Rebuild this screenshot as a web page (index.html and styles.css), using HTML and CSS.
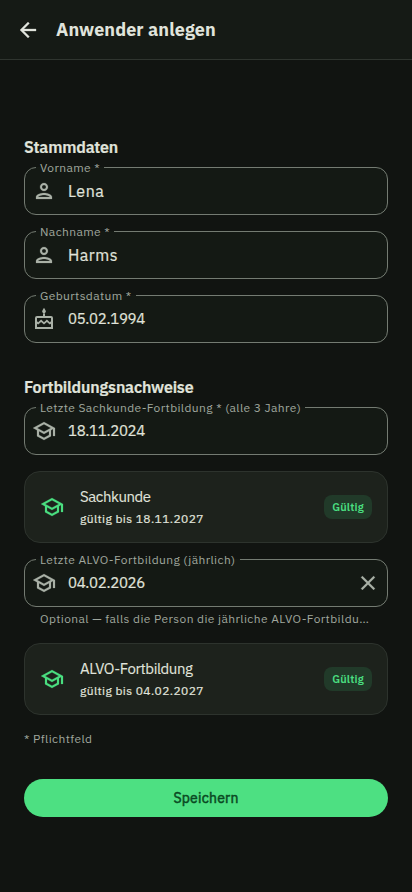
FILE: index.html
```html
<!DOCTYPE html>
<html lang="de">
<head>
<meta charset="utf-8">
<meta name="viewport" content="width=device-width, initial-scale=1">
<title>Anwender anlegen</title>
<link rel="stylesheet" href="styles.css">
</head>
<body>
<svg class="sprite" aria-hidden="true">
  <symbol id="back" viewBox="0 0 24 24"><path d="M20 11H7.830l5.590-5.590L12 4l-8 8 8 8 1.410-1.410L7.830 13H20v-2z" stroke="currentColor" stroke-width=".3"/></symbol>
  <symbol id="person" viewBox="0 0 24 24"><path d="M12 6c1.100 0 2 .9 2 2s-.9 2-2 2-2-.9-2-2 .9-2 2-2m0 10c2.700 0 5.800 1.290 6 2H6c.23-.72 3.310-2 6-2m0-12C9.790 4 8 5.790 8 8s1.790 4 4 4 4-1.790 4-4-1.790-4-4-4zm0 10c-2.670 0-8 1.340-8 4v2h16v-2c0-2.660-5.330-4-8-4z" stroke="currentColor" stroke-width=".2"/></symbol>
  <symbol id="cake" viewBox="0 0 24 24"><path d="M12 0.800l-1.600 2.700a1.850 1.850 0 1 0 3.200 0zM11 6.500h2V9h6a2 2 0 0 1 2 2v11H3V11a2 2 0 0 1 2-2h6zM5 11v3.200l1.200 1.100 2.900-2.700 2.900 2.700 2.900-2.700 2.900 2.700 1.200-1.100V11zm0 5.700V20h14v-3.300l-1.200.9-2.900-2.600-2.900 2.600L9.100 15l-2.900 2.600z" fill-rule="evenodd"/></symbol>
  <symbol id="school" viewBox="0 0 24 24"><path d="M12 3L1 9l4 2.180v6L12 21l7-3.820v-6l2-1.090V17h2V9L12 3zm6.820 6L12 12.720 5.180 9 12 5.280 18.820 9zM17 15.990l-5 2.730-5-2.730v-3.720L12 15l5-2.730v3.720z" stroke="currentColor" stroke-width=".2"/></symbol>
  <symbol id="close" viewBox="0 0 24 24"><path d="M19 6.410L17.590 5 12 10.590 6.410 5 5 6.410 10.590 12 5 17.590 6.410 19 12 13.410 17.590 19 19 17.590 13.410 12z" stroke="currentColor" stroke-width=".2"/></symbol>
</svg>
<header class="bar">
  <svg class="icon"><use href="#back"/></svg>
  <h1 class="title">Anwender anlegen</h1>
</header>
<main class="form">
  <h2 class="section">Stammdaten</h2>
  <fieldset class="field"><legend class="label">Vorname *</legend><div class="control"><svg class="icon"><use href="#person"/></svg><span class="value">Lena</span></div></fieldset>
  <fieldset class="field"><legend class="label">Nachname *</legend><div class="control"><svg class="icon"><use href="#person"/></svg><span class="value">Harms</span></div></fieldset>
  <fieldset class="field"><legend class="label">Geburtsdatum *</legend><div class="control"><svg class="icon"><use href="#cake"/></svg><span class="value date">05.02.1994</span></div></fieldset>
  <h2 class="section training">Fortbildungsnachweise</h2>
  <fieldset class="field"><legend class="label">Letzte Sachkunde-Fortbildung * (alle 3 Jahre)</legend><div class="control"><svg class="icon"><use href="#school"/></svg><span class="value date">18.11.2024</span></div></fieldset>
  <section class="card">
    <svg class="icon"><use href="#school"/></svg>
    <div class="info"><div class="name">Sachkunde</div><div class="until">gültig bis 18.11.2027</div></div>
    <span class="badge">Gültig</span>
  </section>
  <fieldset class="field"><legend class="label">Letzte ALVO-Fortbildung (jährlich)</legend><div class="control"><svg class="icon"><use href="#school"/></svg><span class="value date">04.02.2026</span><svg class="icon clear"><use href="#close"/></svg></div></fieldset>
  <p class="helper">Optional — falls die Person die jährliche ALVO-Fortbildu…</p>
  <section class="card">
    <svg class="icon"><use href="#school"/></svg>
    <div class="info"><div class="name">ALVO-Fortbildung</div><div class="until">gültig bis 04.02.2027</div></div>
    <span class="badge">Gültig</span>
  </section>
  <p class="required">* Pflichtfeld</p>
  <button class="save" type="button">Speichern</button>
</main>
</body>
</html>
```
FILE: styles.css
```css
* { box-sizing: border-box; }
html { background: #111411; }
body {
  margin: 0;
  min-height: 892px;
  background: #111411;
  color: #e0e4dc;
  font-family: "IBM Plex Sans", "Noto Sans", sans-serif;
}
h1, h2, p { margin: 0; }
.sprite { display: none; }
.icon { width: 24px; height: 24px; flex: none; fill: currentColor; }
.bar {
  display: flex;
  align-items: center;
  gap: 16px;
  height: 60px;
  padding: 1px 16px 0;
  background: #151a15;
  border-bottom: 1px solid #2f352f;
}
.title { font-size: 18px; line-height: 24px; font-weight: 700; letter-spacing: 0.08px; }
.form { display: flex; flex-direction: column; padding: 75px 24px 0; }
.section { height: 24px; margin-bottom: 8px; font-size: 16px; line-height: 24px; font-weight: 600; letter-spacing: -0.17px; -webkit-text-stroke: 0.2px currentColor; }
.section.training { margin-top: 16px; }
.field {
  min-width: 0;
  height: 56px;
  margin: -8px 0 16px;
  padding: 0 7px;
  background: #141914;
  border: 1px solid #747b72;
  border-radius: 12px;
}
.label { height: 16px; margin-left: 4px; padding: 1px 4px 0; font-size: 12px; line-height: 16px; letter-spacing: 0.38px; color: #a0a79e; white-space: nowrap; }
.control { display: flex; align-items: center; height: 32px; color: #aab1a7; }
.value { margin-left: 12px; font-size: 16px; line-height: 24px; letter-spacing: 0.5px; color: #e0e4dc; -webkit-text-stroke: 0.2px currentColor; }
.value.date { font-size: 15px; letter-spacing: -0.32px; }
.clear { margin-left: auto; }
.card {
  display: flex;
  align-items: center;
  height: 72px;
  margin-bottom: 16px;
  padding: 0 15px;
  background: #1d221c;
  border: 1px solid #2d332d;
  border-radius: 16px;
  color: #4ade80;
}
.info { flex: 1; margin-left: 16px; color: #e0e4dc; }
.name { font-size: 15px; line-height: 24px; letter-spacing: -0.43px; -webkit-text-stroke: 0.1px currentColor; }
.until { font-size: 12px; line-height: 20px; font-weight: 400; letter-spacing: 0.4px; -webkit-text-stroke: 0.2px currentColor; }
.badge { height: 24px; padding: 0 8px; border-radius: 8px; background: #213a29; font-size: 11px; line-height: 24px; font-weight: 600; letter-spacing: 0.2px; }
.helper { margin: -12px 0 16px; padding: 0 16px; font-size: 12px; line-height: 16px; letter-spacing: 0.4px; color: #a0a79e; white-space: nowrap; }
.required { font-size: 12px; line-height: 16px; letter-spacing: 0.4px; color: #a0a79e; }
.save { height: 38px; margin-top: 32px; padding: 0; border: 0; border-radius: 19px; background: #4de082; color: #0a4922; font: 400 14px/38px "IBM Plex Sans", "Noto Sans", sans-serif; letter-spacing: 0.22px; -webkit-text-stroke: 0.5px currentColor; }
```
